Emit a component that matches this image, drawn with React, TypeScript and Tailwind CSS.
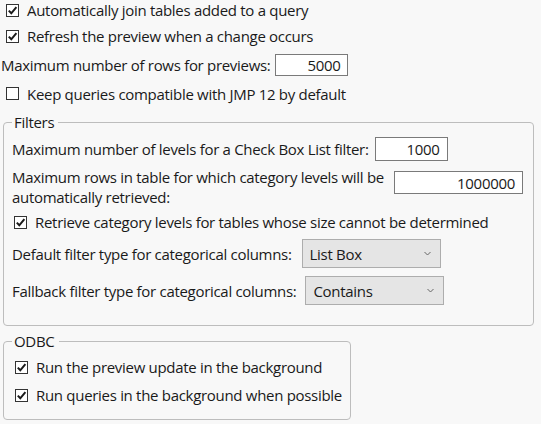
import React from "react";

function Check({ checked, label, h = "h-[28px]" }: { checked?: boolean; label: string; h?: string }) {
  return (
    <label className={`flex ${h} items-center gap-[8px]`}>
      <span className="flex h-[13px] w-[13px] shrink-0 items-center justify-center border border-[#333] bg-white">
        {checked ? (
          <svg viewBox="0 0 11 11" className="h-[11px] w-[11px]">
            <path d="M1.8 5.6 L4.3 8.3 L9.4 2.2" fill="none" stroke="#1a1a1a" strokeWidth="2" />
          </svg>
        ) : null}
      </span>
      <span className="whitespace-nowrap">{label}</span>
    </label>
  );
}

function NumBox({ value, cls }: { value: string; cls: string }) {
  return (
    <span className={`${cls} flex shrink-0 items-center justify-end border border-[#7a7a7a] bg-white pr-[7px]`}>
      {value}
    </span>
  );
}

function Select({ value }: { value: string }) {
  return (
    <span className="flex h-[29px] w-[139px] shrink-0 items-center justify-between border border-[#adadad] bg-[#e5e5e5] pl-[7px] pr-[9px]">
      <span>{value}</span>
      <svg viewBox="0 0 7 5" className="h-[5px] w-[7px]">
        <path d="M0.5 1 L3.5 4 L6.5 1" fill="none" stroke="#666" strokeWidth="1" />
      </svg>
    </span>
  );
}

export default function App() {
  return (
    <div
      className="h-[424px] w-[541px] overflow-hidden bg-[#f8f8f8] text-[15px] leading-[20px] tracking-[-0.3px] text-[#1a1a1a]"
      style={{ fontFamily: '"Open Sans", "Noto Sans", sans-serif' }}
    >
      <div className="pl-[1px]">
        <div className="pl-[5px]">
          <Check checked label="Automatically join tables added to a query" h="h-[20px]" />
          <Check checked label="Refresh the preview when a change occurs" h="h-[32px]" />
        </div>
        <div className="flex h-[25px] items-center gap-[5px]">
          <span className="whitespace-nowrap">Maximum number of rows for previews:</span>
          <NumBox value="5000" cls="h-[22px] w-[73px]" />
        </div>
        <div className="pl-[5px]">
          <Check label="Keep queries compatible with JMP 12 by default" h="h-[33px]" />
        </div>
      </div>

      <fieldset className="ml-[3px] mt-[2px] h-[214px] w-[531px] rounded-[4px] border border-[#bdbdbd] px-[8px]">
        <legend className="pl-[2px] pr-[4px]">Filters</legend>
        <div className="mt-[5px] flex h-[24px] items-center gap-[6px]">
          <span className="whitespace-nowrap">Maximum number of levels for a Check Box List filter:</span>
          <NumBox value="1000" cls="h-[24px] w-[73px]" />
        </div>
        <div className="mt-[6px] flex items-start">
          <span className="w-[382px] whitespace-nowrap leading-[20px]">
            Maximum rows in table for which category levels will be
            <br />
            automatically retrieved:
          </span>
          <span className="mt-[4px]">
            <NumBox value="1000000" cls="h-[23px] w-[129px]" />
          </span>
        </div>
        <div className="mt-[1px] pl-[2px]">
          <Check checked label="Retrieve category levels for tables whose size cannot be determined" />
        </div>
        <div className="mt-[3px] flex h-[29px] items-center gap-[10px]">
          <span className="whitespace-nowrap">Default filter type for categorical columns:</span>
          <Select value="List Box" />
        </div>
        <div className="mt-[8px] flex h-[29px] items-center gap-[9px]">
          <span className="whitespace-nowrap">Fallback filter type for categorical columns:</span>
          <Select value="Contains" />
        </div>
      </fieldset>

      <fieldset className="ml-[3px] mt-[5px] h-[89px] w-[345px] rounded-[4px] border border-[#bdbdbd] px-[8px]">
        <legend className="pl-[2px] pr-[4px]">ODBC</legend>
        <div className="mt-[2px] pl-[3px]">
          <Check checked label="Run the preview update in the background" />
          <Check checked label="Run queries in the background when possible" />
        </div>
      </fieldset>
    </div>
  );
}
